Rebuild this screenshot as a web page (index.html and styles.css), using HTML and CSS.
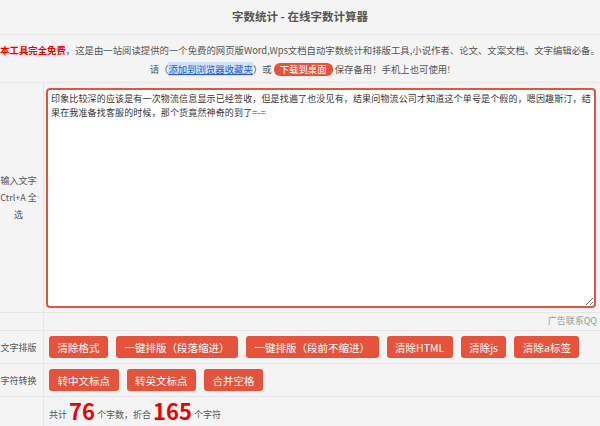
FILE: index.html
```html
<!DOCTYPE html>
<html lang="zh-CN">
<head>
  <meta charset="UTF-8">
  <title>字数统计 - 在线字数计算器</title>
  <link rel="stylesheet" href="styles.css">
</head>
<body>
  <div class="page">
    <h1 class="title">字数统计 - 在线字数计算器</h1>
    <div class="intro">
      <p><b class="free">本工具完全免费</b>，这是由一站阅读提供的一个免费的网页版Word,Wps文档自动字数统计和排版工具,小说作者、论文、文案文档、文字编辑必备。</p>
      <p>请（<a href="#" class="fav">添加到浏览器收藏夹</a>）或 <a href="#" class="download">下载到桌面</a> 保存备用！手机上也可使用!</p>
    </div>
    <div class="table">
      <div class="row row-input">
        <div class="label">输入文字<br>Ctrl+A 全选</div>
        <div class="cell">
          <textarea class="text">印象比较深的应该是有一次物流信息显示已经签收，但是找遍了也没见有，结果问物流公司才知道这个单号是个假的，嗯因趣斯汀，结果在我准备找客服的时候，那个货竟然神奇的到了=-=</textarea>
        </div>
      </div>
      <div class="row row-ad">
        <div class="label"></div>
        <div class="cell ad">广告联系QQ</div>
      </div>
      <div class="row">
        <div class="label">文字排版</div>
        <div class="cell buttons">
          <button>清除格式</button>
          <button>一键排版（段落缩进）</button>
          <button>一键排版（段前不缩进）</button>
          <button>清除HTML</button>
          <button>清除js</button>
          <button>清除a标签</button>
        </div>
      </div>
      <div class="row">
        <div class="label">字符转换</div>
        <div class="cell buttons">
          <button>转中文标点</button>
          <button>转英文标点</button>
          <button>合并空格</button>
        </div>
      </div>
      <div class="row row-count">
        <div class="label"></div>
        <div class="cell count">共计 <span class="num">76</span> 个字数，折合 <span class="num">165</span> 个字符</div>
      </div>
    </div>
  </div>
</body>
</html>
```

FILE: styles.css
```css
body {
  margin: 0;
  background: #f4f4f4;
  font-family: "Noto Sans CJK SC", "Liberation Sans", sans-serif;
  font-size: 9px;
  color: #555;
  text-spacing-trim: space-all;
}
.page {
  width: 600px;
  height: 426px;
  overflow: hidden;
}
.title {
  margin: 0;
  height: 34px;
  line-height: 32px;
  text-align: center;
  font-size: 11.5px;
  font-weight: bold;
  color: #555;
  border-bottom: 1px solid #e9e9e9;
}
.intro {
  padding: 6px 0 3px;
  text-align: center;
  white-space: nowrap;
  font-size: 9.4px;
}
.intro p {
  margin: 0;
  line-height: 19px;
}
.free {
  color: #e00;
}
.fav {
  color: #2a5cc8;
  background: #cfe0f7;
  text-decoration: underline;
}
.download {
  display: inline-block;
  padding: 0 6px;
  line-height: 13px;
  background: #e5533c;
  color: #fff;
  border-radius: 6px;
  text-decoration: none;
}
.table {
  border-top: 1px solid #e9e9e9;
}
.row {
  display: grid;
  grid-template-columns: 44px 1fr;
  border-bottom: 1px solid #e6e6e6;
}
.label {
  border-right: 1px solid #e6e6e6;
  padding: 0 6px 0 0;
  display: flex;
  align-items: center;
  justify-content: center;
  text-align: center;
  line-height: 17px;
  color: #555;
}
.cell {
  padding: 5px 4px 4px 2px;
}
.text {
  display: block;
  box-sizing: border-box;
  width: 550px;
  height: 220px;
  margin: 0;
  padding: 2px 3px;
  border: 2px solid #e0573f;
  border-radius: 4px;
  background: #fff;
  font-family: inherit;
  font-size: 9px;
  letter-spacing: 0.15px;
  line-height: 14px;
  color: #333;
  resize: vertical;
}
.row-ad .cell {
  padding: 2px 3px 3px;
}
.ad {
  text-align: right;
  color: #999;
  line-height: 12px;
}
.buttons {
  display: flex;
  gap: 8px;
  padding: 5px 4px 5px 5px;
}
.buttons button {
  height: 22px;
  padding: 0 8.5px;
  border: none;
  border-radius: 3px;
  background: #e5533c;
  color: #fff;
  font-family: inherit;
  font-size: 10.5px;
  cursor: pointer;
  text-spacing-trim: space-all;
}
.count {
  padding: 2px 5px 0;
  line-height: 22px;
  color: #555;
}
.num {
  font-size: 22px;
  font-weight: bold;
  color: #e00;
  vertical-align: -2px;
}
```
